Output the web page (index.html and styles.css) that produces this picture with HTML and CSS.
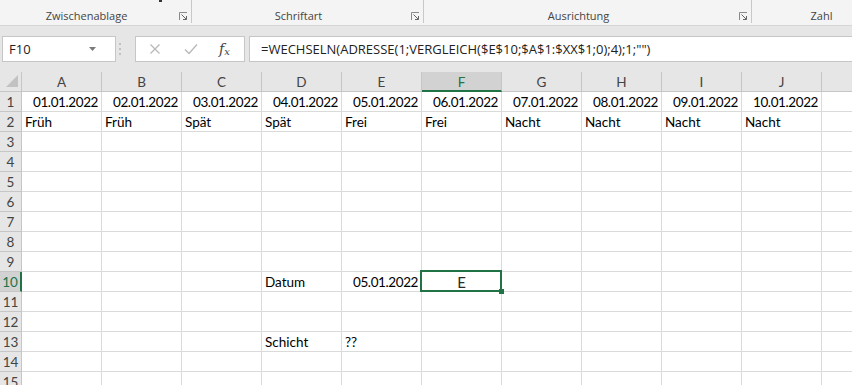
FILE: index.html
```html
<!DOCTYPE html>
<html lang="de">
<head>
<meta charset="utf-8">
<title>Excel</title>
<link rel="stylesheet" href="styles.css">
</head>
<body>
<div class="app">
  <div class="ribbon">
    <div class="group g1"><span class="stub"></span><span class="glabel">Zwischenablage</span><svg class="launch" width="9" height="9" viewBox="0 0 9 9"><path d="M0.5 8V0.5H8" fill="none" stroke="#8a8a8a"/><path d="M2.5 2.5L7.5 7.5M4 7.5H7.5V4" fill="none" stroke="#666"/></svg></div>
    <div class="group g2"><span class="glabel">Schriftart</span><svg class="launch" width="9" height="9" viewBox="0 0 9 9"><path d="M0.5 8V0.5H8" fill="none" stroke="#8a8a8a"/><path d="M2.5 2.5L7.5 7.5M4 7.5H7.5V4" fill="none" stroke="#666"/></svg></div>
    <div class="group g3"><span class="glabel">Ausrichtung</span><svg class="launch" width="9" height="9" viewBox="0 0 9 9"><path d="M0.5 8V0.5H8" fill="none" stroke="#8a8a8a"/><path d="M2.5 2.5L7.5 7.5M4 7.5H7.5V4" fill="none" stroke="#666"/></svg></div>
    <div class="group g4"><span class="glabel">Zahl</span></div>
  </div>

  <div class="fbar">
    <div class="namebox"><span class="nbtext">F10</span><svg class="dd" width="7" height="4" viewBox="0 0 7 4"><path d="M0 0H7L3.5 4Z" fill="#7a7a7a"/></svg></div>
    <svg class="grip" width="4" height="14" viewBox="0 0 4 14"><circle cx="2" cy="2" r="1" fill="#b4b4b4"/><circle cx="2" cy="7" r="1" fill="#b4b4b4"/><circle cx="2" cy="12" r="1" fill="#b4b4b4"/></svg>
    <div class="fbtns">
      <svg class="fbtn" width="12" height="12" viewBox="0 0 12 12"><path d="M1.5 1.5L10.5 10.5M10.5 1.5L1.5 10.5" stroke="#b9b9b9" stroke-width="1.3" fill="none"/></svg>
      <svg class="fbtn" width="14" height="12" viewBox="0 0 14 12"><path d="M1 6.5L5 10.5L13 1.5" stroke="#b9b9b9" stroke-width="1.4" fill="none"/></svg>
      <span class="fx">f<sub>x</sub></span>
    </div>
    <div class="formula">=WECHSELN(ADRESSE(1;VERGLEICH($E$10;$A$1:$XX$1;0);4);1;"")</div>
  </div>

  <div class="sheet">
    <div class="corner"><span class="tri"></span></div>
    <div class="ch">A</div><div class="ch">B</div><div class="ch">C</div><div class="ch">D</div><div class="ch">E</div><div class="ch sel">F</div><div class="ch">G</div><div class="ch">H</div><div class="ch">I</div><div class="ch">J</div><div class="ch"></div>

    <div class="rh">1</div><div class="c r">01.01.2022</div><div class="c r">02.01.2022</div><div class="c r">03.01.2022</div><div class="c r">04.01.2022</div><div class="c r">05.01.2022</div><div class="c r">06.01.2022</div><div class="c r">07.01.2022</div><div class="c r">08.01.2022</div><div class="c r">09.01.2022</div><div class="c r">10.01.2022</div><div class="c"></div>

    <div class="rh">2</div><div class="c">Früh</div><div class="c">Früh</div><div class="c">Spät</div><div class="c">Spät</div><div class="c">Frei</div><div class="c">Frei</div><div class="c">Nacht</div><div class="c">Nacht</div><div class="c">Nacht</div><div class="c">Nacht</div><div class="c"></div>

    <div class="rh">3</div><div class="c"></div><div class="c"></div><div class="c"></div><div class="c"></div><div class="c"></div><div class="c"></div><div class="c"></div><div class="c"></div><div class="c"></div><div class="c"></div><div class="c"></div>
    <div class="rh">4</div><div class="c"></div><div class="c"></div><div class="c"></div><div class="c"></div><div class="c"></div><div class="c"></div><div class="c"></div><div class="c"></div><div class="c"></div><div class="c"></div><div class="c"></div>
    <div class="rh">5</div><div class="c"></div><div class="c"></div><div class="c"></div><div class="c"></div><div class="c"></div><div class="c"></div><div class="c"></div><div class="c"></div><div class="c"></div><div class="c"></div><div class="c"></div>
    <div class="rh">6</div><div class="c"></div><div class="c"></div><div class="c"></div><div class="c"></div><div class="c"></div><div class="c"></div><div class="c"></div><div class="c"></div><div class="c"></div><div class="c"></div><div class="c"></div>
    <div class="rh">7</div><div class="c"></div><div class="c"></div><div class="c"></div><div class="c"></div><div class="c"></div><div class="c"></div><div class="c"></div><div class="c"></div><div class="c"></div><div class="c"></div><div class="c"></div>
    <div class="rh">8</div><div class="c"></div><div class="c"></div><div class="c"></div><div class="c"></div><div class="c"></div><div class="c"></div><div class="c"></div><div class="c"></div><div class="c"></div><div class="c"></div><div class="c"></div>
    <div class="rh">9</div><div class="c"></div><div class="c"></div><div class="c"></div><div class="c"></div><div class="c"></div><div class="c"></div><div class="c"></div><div class="c"></div><div class="c"></div><div class="c"></div><div class="c"></div>

    <div class="rh selr">10</div><div class="c"></div><div class="c"></div><div class="c"></div><div class="c">Datum</div><div class="c r">05.01.2022</div><div class="c active">E</div><div class="c"></div><div class="c"></div><div class="c"></div><div class="c"></div><div class="c"></div>

    <div class="rh">11</div><div class="c"></div><div class="c"></div><div class="c"></div><div class="c"></div><div class="c"></div><div class="c"></div><div class="c"></div><div class="c"></div><div class="c"></div><div class="c"></div><div class="c"></div>
    <div class="rh">12</div><div class="c"></div><div class="c"></div><div class="c"></div><div class="c"></div><div class="c"></div><div class="c"></div><div class="c"></div><div class="c"></div><div class="c"></div><div class="c"></div><div class="c"></div>

    <div class="rh">13</div><div class="c"></div><div class="c"></div><div class="c"></div><div class="c">Schicht</div><div class="c">??</div><div class="c"></div><div class="c"></div><div class="c"></div><div class="c"></div><div class="c"></div><div class="c"></div>

    <div class="rh">14</div><div class="c"></div><div class="c"></div><div class="c"></div><div class="c"></div><div class="c"></div><div class="c"></div><div class="c"></div><div class="c"></div><div class="c"></div><div class="c"></div><div class="c"></div>
    <div class="rh">15</div><div class="c"></div><div class="c"></div><div class="c"></div><div class="c"></div><div class="c"></div><div class="c"></div><div class="c"></div><div class="c"></div><div class="c"></div><div class="c"></div><div class="c"></div>
  </div>
</div>
</body>
</html>
```

FILE: styles.css
```css
* { box-sizing: border-box; }
html, body { margin: 0; padding: 0; }
body {
  width: 852px;
  height: 385px;
  overflow: hidden;
  background: #e6e6e6;
  font-family: "Open Sans", "Noto Sans", sans-serif;
}
.app { display: flex; flex-direction: column; width: 852px; }

/* Ribbon */
.ribbon {
  display: flex;
  height: 26px;
  background: #f4f4f4;
  border-bottom: 1px solid #d6d6d6;
  flex: none;
}
.group {
  position: relative;
  display: flex;
  align-items: flex-start;
  height: 23px;
  border-right: 1px solid #c8c8c8;
  padding-right: 3px;
  flex: none;
}
.g1 { width: 192px; }
.g2 { width: 232px; }
.g3 { width: 328px; }
.g4 { width: 154px; border-right: none; }
.glabel {
  flex: 1;
  text-align: center;
  padding-right: 6px;
  font-size: 11px;
  line-height: 14px;
  padding-top: 9px;
  color: #444;
  white-space: nowrap;
}
.g4 .glabel { padding-right: 12px; }
.launch { flex: none; margin-top: 12px; }
.stub {
  position: absolute;
  left: 159px;
  top: 0;
  width: 3px;
  height: 2px;
  background: #333;
}

/* Formula bar */
.fbar {
  display: flex;
  align-items: center;
  height: 46px;
  padding: 10px 0 10px 2px;
  flex: none;
}
.namebox {
  display: flex;
  align-items: center;
  width: 114px;
  height: 26px;
  background: #fff;
  border: 1px solid #c6c6c6;
  padding-left: 6px;
  padding-right: 19px;
}
.nbtext {
  flex: 1;
  font-size: 13px;
  color: #222;
  line-height: 24px;
}
.dd { flex: none; }
.grip { flex: none; margin-left: 2px; margin-right: 13px; }
.fbtns {
  display: flex;
  align-items: center;
  width: 110px;
  height: 26px;
  background: #fff;
  border: 1px solid #c6c6c6;
  padding-left: 13px;
}
.fbtns .fbtn:nth-child(1) { margin-right: 23px; }
.fbtns .fbtn:nth-child(2) { margin-right: 21px; }
.fx {
  font-family: "DejaVu Serif", "Liberation Serif", serif;
  font-style: italic;
  font-size: 14px;
  color: #444;
  line-height: 1;
}
.fx sub { font-size: 10px; vertical-align: -1px; }
.formula {
  flex: 1;
  margin-left: 4px;
  margin-right: -20px;
  height: 26px;
  background: #fff;
  border: 1px solid #c6c6c6;
  border-right: none;
  padding-left: 11px;
  font-size: 13px;
  line-height: 24px;
  color: #222;
  white-space: nowrap;
}

/* Sheet */
.sheet {
  display: grid;
  grid-template-columns: 22px repeat(11, 80px);
  grid-auto-rows: 20px;
  background: #fff;
  font-family: "Lato", "Liberation Sans", sans-serif;
  font-size: 13.5px;
}
.corner {
  position: relative;
  background: #e6e6e6;
  border-right: 1px solid #c6c6c6;
  border-bottom: 1px solid #c6c6c6;
}
.tri {
  display: block;
  width: 0;
  height: 0;
  margin: 3px 0 0 6px;
  border-left: 12px solid transparent;
  border-bottom: 12px solid #c2c2c2;
}
.ch {
  background: #e6e6e6;
  border-right: 1px solid #c6c6c6;
  border-bottom: 1px solid #c6c6c6;
  text-align: center;
  line-height: 20px;
  color: #444;
}
.ch.sel {
  background: #d2d2d2;
  color: #217346;
  border-bottom: 2px solid #217346;
}
.rh {
  background: #e6e6e6;
  border-right: 1px solid #c6c6c6;
  border-bottom: 1px solid #c6c6c6;
  text-align: center;
  line-height: 20px;
  color: #444;
}
.rh.selr {
  background: #d2d2d2;
  color: #217346;
  border-right: 2px solid #217346;
}
.c {
  border-right: 1px solid #dadada;
  border-bottom: 1px solid #dadada;
  padding: 0 3px;
  line-height: 20px;
  color: #000;
  white-space: nowrap;
  overflow: visible;
}
.c.r { text-align: right; letter-spacing: -0.4px; padding-right: 3px; }
.c.active {
  position: relative;
  text-align: center;
  font-weight: 400;
  font-size: 15px;
  color: #2a2a2a;
  line-height: 20px;
}
.c.active::after {
  content: "";
  position: absolute;
  top: -2px;
  left: -2px;
  right: -1px;
  bottom: -1px;
  border: 2px solid #217346;
}
.c.active::before {
  content: "";
  position: absolute;
  right: -3px;
  bottom: -3px;
  width: 5px;
  height: 5px;
  background: #217346;
  z-index: 1;
}
```
